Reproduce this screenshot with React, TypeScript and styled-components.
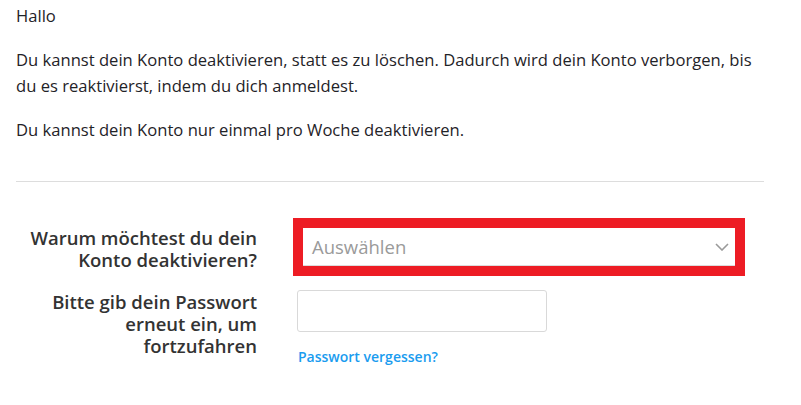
import * as React from "react"
import styled, { createGlobalStyle } from "styled-components"

const GlobalStyle = createGlobalStyle`
  body {
    margin: 0;
    background: #ffffff;
    font-family: "Open Sans", "Noto Sans", sans-serif;
    color: #1f2328;
  }
`

const Page = styled.div`
  padding: 3px 37px 0 16px;
  width: 748px;
`

const Paragraph = styled.p`
  margin: 0 0 18px;
  font-size: 16.6px;
  line-height: 26px;
`

const Divider = styled.hr`
  border: none;
  border-top: 1px solid #dddddd;
  margin: 38px 0 36px;
`

const Form = styled.div`
  display: grid;
  grid-template-columns: 241px 1fr;
  column-gap: 36px;
  row-gap: 14px;
`

const Label = styled.label<{ $top: number }>`
  text-align: right;
  font-size: 18.5px;
  font-weight: 600;
  line-height: 22px;
  color: #333333;
  padding-top: ${(p) => p.$top}px;
`

const Highlight = styled.div`
  width: 452px;
  box-sizing: border-box;
  border: 10px solid #ed1c24;
`

const Select = styled.div`
  height: 38px;
  display: flex;
  align-items: center;
  justify-content: space-between;
  padding: 0 6px 0 9px;
  border-bottom: 1px solid #dcdcdc;
  box-sizing: border-box;
  font-size: 18.5px;
  color: #9a9a9a;
`

const Field = styled.div`
  display: flex;
  flex-direction: column;
  align-items: flex-start;
  padding-left: 4px;
`

const Input = styled.input`
  width: 250px;
  height: 42px;
  box-sizing: border-box;
  border: 1px solid #d9d9d9;
  border-radius: 3px;
  margin: 0 0 15px;
  outline: none;
`

const Link = styled.a`
  font-size: 14px;
  font-weight: 600;
  color: #1a9cef;
  text-decoration: none;
  margin-left: 1px;
`

const Chevron = () => (
  <svg width="14" height="8" viewBox="0 0 14 8">
    <path d="M1 1l6 6 6-6" fill="none" stroke="#9a9a9a" strokeWidth="1.6" />
  </svg>
)

export default function App() {
  return (
    <>
      <GlobalStyle />
      <Page>
        <Paragraph>Hallo</Paragraph>
        <Paragraph>
          Du kannst dein Konto deaktivieren, statt es zu löschen. Dadurch wird dein Konto verborgen,
          bis du es reaktivierst, indem du dich anmeldest.
        </Paragraph>
        <Paragraph>Du kannst dein Konto nur einmal pro Woche deaktivieren.</Paragraph>
        <Divider />
        <Form>
          <Label $top={9}>Warum möchtest du dein Konto deaktivieren?</Label>
          <Highlight>
            <Select>
              <span>Auswählen</span>
              <Chevron />
            </Select>
          </Highlight>
          <Label $top={1}>Bitte gib dein Passwort erneut ein, um fortzufahren</Label>
          <Field>
            <Input type="password" />
            <Link href="#">Passwort vergessen?</Link>
          </Field>
        </Form>
      </Page>
    </>
  )
}
